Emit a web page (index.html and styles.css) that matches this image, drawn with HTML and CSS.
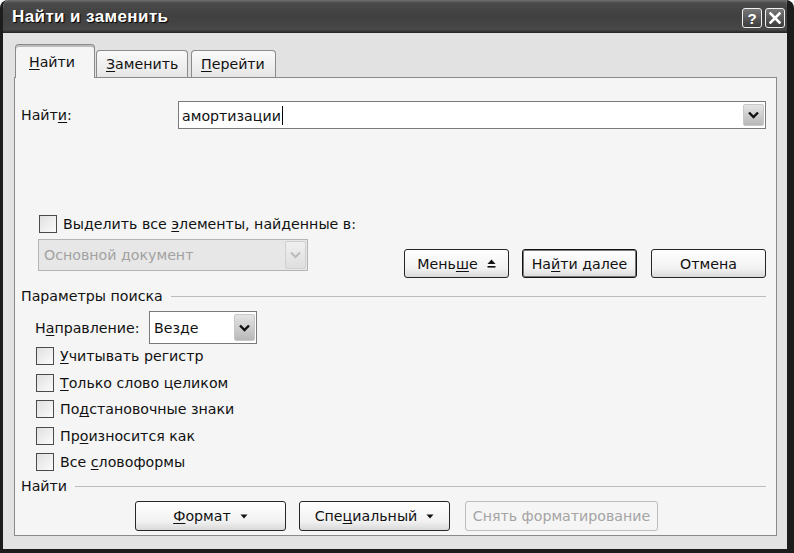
FILE: index.html
```html
<!DOCTYPE html>
<html lang="ru">
<head>
    <meta charset="UTF-8">
    <title>Найти и заменить</title>
    <link rel="stylesheet" href="styles.css">
</head>
<body>
    <div class="window">
        <div class="titlebar">
            <span class="title">Найти и заменить</span>
            <div class="caption-btns">
                <span class="cap-btn">?</span>
                <span class="cap-btn">
                    <svg width="12" height="12" viewBox="0 0 12 12"><path d="M1.5 1.5 L10.5 10.5 M10.5 1.5 L1.5 10.5" stroke="#fff" stroke-width="2.6" stroke-linecap="square"/></svg>
                </span>
            </div>
        </div>
        <div class="frame">
            <div class="tabs">
                <div class="tab active"><span><u>Н</u>айти</span></div>
                <div class="tab"><span><u>З</u>аменить</span></div>
                <div class="tab"><span><u>П</u>ерейти</span></div>
            </div>
            <div class="panel">
                <div class="find-row">
                    <span class="find-label">Найт<u>и</u>:</span>
                    <div class="combo combo-find">
                        <span class="combo-text">амортизации<span class="caret"></span></span>
                        <span class="combo-btn">
                            <svg width="11" height="8" viewBox="0 0 11 8"><path d="M1 1.5 L5.5 6 L10 1.5" fill="none" stroke="#111" stroke-width="2.4"/></svg>
                        </span>
                    </div>
                </div>

                <div class="mid">
                    <div class="mid-left">
                        <div class="check"><span class="box"></span><span>Выделить все <u>э</u>лементы, найденные в:</span></div>
                        <div class="combo combo-doc disabled">
                            <span class="combo-text">Основной документ</span>
                            <span class="combo-btn">
                                <svg width="11" height="8" viewBox="0 0 11 8"><path d="M1 1.5 L5.5 6 L10 1.5" fill="none" stroke="#bbb" stroke-width="2"/></svg>
                            </span>
                        </div>
                    </div>
                    <div class="mid-btns">
                        <button class="btn btn-less"><span>Мень<u>ш</u>е</span>
                            <svg width="9" height="9" viewBox="0 0 9 9"><path d="M4.5 0.5 L8.5 5 L0.5 5 Z" fill="#111"/><rect x="0.5" y="7" width="8" height="1.6" fill="#111"/></svg>
                        </button>
                        <button class="btn btn-next default"><span>На<u>й</u>ти далее</span></button>
                        <button class="btn btn-cancel"><span>Отмена</span></button>
                    </div>
                </div>

                <div class="section">Параметры поиска</div>

                <div class="dir-row">
                    <span class="dir-label">Н<u>а</u>правление:</span>
                    <div class="combo combo-dir">
                        <span class="combo-text">Везде</span>
                        <span class="combo-btn">
                            <svg width="11" height="8" viewBox="0 0 11 8"><path d="M1 1.5 L5.5 6 L10 1.5" fill="none" stroke="#111" stroke-width="2.4"/></svg>
                        </span>
                    </div>
                </div>

                <div class="options">
                    <div class="check"><span class="box"></span><span><u>У</u>читывать регистр</span></div>
                    <div class="check"><span class="box"></span><span><u>Т</u>олько слово целиком</span></div>
                    <div class="check"><span class="box"></span><span>По<u>д</u>становочные знаки</span></div>
                    <div class="check"><span class="box"></span><span>Пр<u>о</u>износится как</span></div>
                    <div class="check"><span class="box"></span><span>Все <u>с</u>ловоформы</span></div>
                </div>

                <div class="section section-find">Найти</div>

                <div class="bottom-btns">
                    <button class="btn btn-wide"><span><u>Ф</u>ормат</span>
                        <svg width="8" height="5" viewBox="0 0 8 5"><path d="M0.5 0.5 L7.5 0.5 L4 4.5 Z" fill="#111"/></svg>
                    </button>
                    <button class="btn btn-wide"><span>Спе<u>ц</u>иальный</span>
                        <svg width="8" height="5" viewBox="0 0 8 5"><path d="M0.5 0.5 L7.5 0.5 L4 4.5 Z" fill="#111"/></svg>
                    </button>
                    <button class="btn btn-clear" disabled><span>Снять форматирование</span></button>
                </div>
            </div>
        </div>
    </div>
</body>
</html>
```

FILE: styles.css
```css
* {
    box-sizing: border-box;
}
body {
    margin: 0;
    background: #fff;
    font-family: "DejaVu Sans", Verdana, sans-serif;
    font-size: 14.2px;
    color: #111;
}
u {
    text-decoration: underline;
    text-underline-offset: 2px;
}
.window {
    width: 794px;
    height: 553px;
    display: flex;
    flex-direction: column;
    background: #e2e2e2;
    border-left: 3px solid #1c1c1c;
    border-right: 7px solid #1c1c1c;
    border-bottom: 4px solid #1c1c1c;
    border-radius: 8px 8px 0 0;
    overflow: hidden;
}
.titlebar {
    height: 33px;
    flex: none;
    display: flex;
    align-items: center;
    justify-content: space-between;
    padding: 0 2px 0 9px;
    background: linear-gradient(#707070 0, #4a4a4a 3px, #404040 50%, #484848 90%, #222 100%);
}
.title {
    color: #fff;
    font-family: "Liberation Sans", Arial, sans-serif;
    font-weight: bold;
    font-size: 17px;
    text-shadow: 1px 1px 1px #000;
    letter-spacing: 0.4px;
}
.caption-btns {
    display: flex;
    gap: 3px;
    margin-top: 3px;
}
.cap-btn {
    width: 20px;
    height: 20px;
    display: flex;
    align-items: center;
    justify-content: center;
    border: 1px solid #f0f0f0;
    border-radius: 3px;
    background: linear-gradient(#777, #3c3c3c);
    color: #fff;
    font-family: "Liberation Sans", Arial, sans-serif;
    font-weight: bold;
    font-size: 15px;
}
.frame {
    flex: 1;
    display: flex;
    flex-direction: column;
    padding: 11px 10px 13px 11px;
}
.tabs {
    display: flex;
    align-items: flex-end;
    height: 33px;
    padding-left: 1px;
    position: relative;
    z-index: 1;
}
.tab {
    height: 27px;
    padding: 0 9px;
    display: flex;
    align-items: center;
    border: 1px solid #8a8a8a;
    border-bottom: none;
    border-radius: 4px 4px 0 0;
    background: linear-gradient(#fafafa, #e6e6e6);
    margin-right: 2px;
    white-space: nowrap;
}
.tab:nth-child(2) {
    width: 92px;
    margin-right: 3px;
}
.tab:nth-child(3) {
    width: 85px;
}
.tab.active {
    width: 80px;
    height: 34px;
    margin-bottom: -1px;
    margin-right: 1px;
    padding-left: 13px;
    background: #f5f5f5;
    border-color: #8a8a8a;
    box-shadow: inset 0 2px 0 #bdbdbd;
}
.panel {
    flex: 1;
    display: flex;
    flex-direction: column;
    background: #f5f5f5;
    border: 1px solid #8a8a8a;
    padding: 0 10px 0 6px;
}
.combo {
    display: flex;
    align-items: center;
    justify-content: space-between;
    background: #fff;
    border: 1px solid #7a7a7a;
    padding: 0 1px 0 3px;
}
.combo-btn {
    width: 21px;
    height: calc(100% - 4px);
    display: flex;
    align-items: center;
    justify-content: center;
    background: linear-gradient(#e4e4e4, #b8b8b8);
    border: 1px solid #c8c8c8;
    border-radius: 2px;
}
.find-row {
    display: flex;
    align-items: center;
    margin-top: 23px;
}
.find-label {
    width: 157px;
}
.combo-find {
    flex: 1;
    height: 28px;
}
.caret {
    display: inline-block;
    width: 1px;
    height: 19px;
    background: #000;
    vertical-align: -4px;
    margin-left: 1px;
}
.check {
    display: flex;
    align-items: center;
    height: 18px;
    white-space: nowrap;
}
.box {
    width: 18px;
    height: 18px;
    flex: none;
    margin-right: 6px;
    border: 1px solid #4a4a4a;
    background: linear-gradient(135deg, #e0e0e0, #fbfbfb);
}
.mid {
    display: flex;
    align-items: flex-start;
    margin-top: 86px;
    padding-left: 17px;
}
.mid-left .check {
    margin-left: 1px;
}
.combo-doc {
    width: 270px;
    height: 32px;
    margin-top: 6px;
}
.combo.disabled {
    background: #e7e7e7;
    border-color: #b4b4b4;
    color: #a2a2a2;
    padding-left: 5px;
}
.combo.disabled .combo-btn {
    background: linear-gradient(#f0f0f0, #dedede);
    border-color: #d0d0d0;
    height: 28px;
}
.mid-btns {
    margin-left: auto;
    margin-top: 34px;
    display: flex;
    gap: 13px;
}
.btn {
    height: 29px;
    font-family: inherit;
    font-size: 14.2px;
    color: #111;
    background: linear-gradient(#fff, #f1f1f1 70%, #d9d9d9);
    border: 1px solid #262626;
    border-radius: 3px;
    display: flex;
    align-items: center;
    justify-content: center;
    gap: 9px;
    padding: 0;
    white-space: nowrap;
}
.btn-less {
    width: 105px;
}
.btn-next {
    width: 115px;
}
.btn-cancel {
    width: 115px;
    margin-left: 1px;
}
.btn.default {
    border-color: #111;
    box-shadow: inset 0 0 0 1px #7a7a7a;
}
.section {
    display: flex;
    align-items: center;
    height: 16px;
    margin-top: 10px;
}
.section::after {
    content: "";
    flex: 1;
    height: 1px;
    margin-left: 8px;
    background: #bcbcbc;
}
.dir-row {
    display: flex;
    align-items: center;
    margin-top: 7px;
    padding-left: 14px;
}
.dir-label {
    width: 114px;
}
.combo-dir {
    width: 108px;
    height: 33px;
    padding-left: 4px;
}
.combo-dir .combo-btn {
    height: 27px;
}
.options {
    display: flex;
    flex-direction: column;
    gap: 8.5px;
    margin-top: 3px;
    padding-left: 15px;
}
.section-find {
    margin-top: 7px;
}
.bottom-btns {
    display: flex;
    gap: 13px;
    margin-top: 7px;
    padding-left: 114px;
}
.bottom-btns .btn {
    height: 30px;
}
.btn-wide {
    width: 151px;
}
.btn-clear {
    width: 193px;
    margin-left: 2px;
}
.btn:disabled {
    color: #a4a4a4;
    border-color: #bdbdbd;
    background: #f5f5f5;
}
```
